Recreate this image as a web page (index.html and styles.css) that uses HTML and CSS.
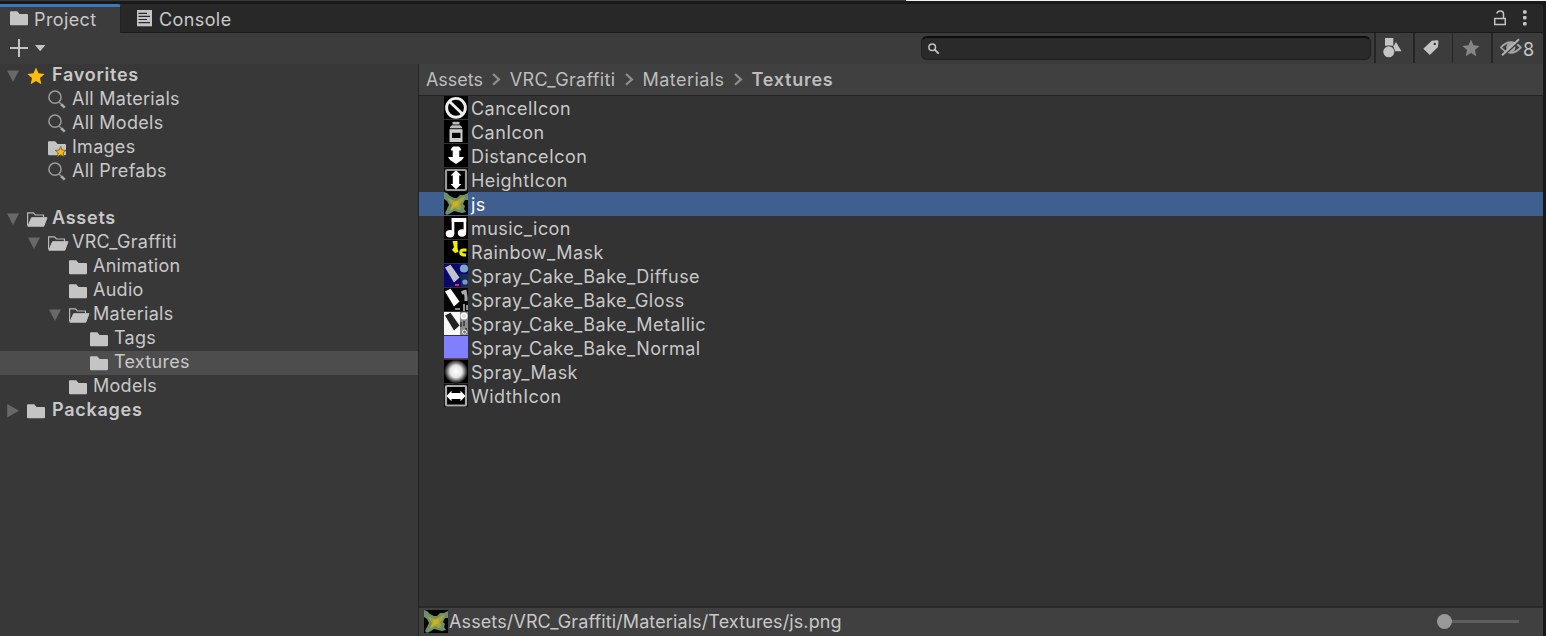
FILE: index.html
```
<!DOCTYPE html>
<html lang="en">
<head>
<meta charset="utf-8">
<title>Project</title>
<link rel="stylesheet" href="styles.css">
</head>
<body>
<svg class="defs" aria-hidden="true">
  <defs>
    <symbol id="folder" viewBox="0 0 18 15"><path d="M0 1.2Q0 .3 .9 .3H7.2L9.6 3H17Q18 3 18 4V13.3Q18 14.3 17 14.3H1Q0 14.3 0 13.3Z" fill="#c4c4c4"/></symbol>
    <symbol id="open" viewBox="0 0 21 15"><path d="M.6 13.5V.9H6.5L8.4 3H16.5V5.5" fill="none" stroke="#b8b8b8" stroke-width="1.2"/><path d="M4.6 5.7H20L16.8 14.2H.9Z" fill="#c4c4c4" stroke="#c4c4c4" stroke-linejoin="round"/></symbol>
    <symbol id="star" viewBox="0 0 18 18"><path d="M9 .5L11.5 6.2L17.6 6.9L13 11L14.3 17.2L9 14L3.7 17.2L5 11L.4 6.9L6.5 6.2Z"/></symbol>
    <symbol id="search" viewBox="0 0 18 19"><circle cx="7" cy="7.2" r="6.1" fill="none" stroke="#9b9b9b" stroke-width="1.5"/><path d="M11.2 12.2L12.7 13.8" stroke="#9b9b9b" stroke-width="1.3"/><path d="M13 14L16.7 17.6" stroke="#a8a8a8" stroke-width="2.6"/></symbol>
    <symbol id="down" viewBox="0 0 12 12"><path d="M0 .5H12L6 12Z" fill="#686868"/></symbol>
    <symbol id="right" viewBox="0 0 12 14"><path d="M.2 0V13.6L12 6.8Z" fill="#686868"/></symbol>
    <symbol id="chevron" viewBox="0 0 9 13"><path d="M1 1L7 6.4L1 11.8" fill="none" stroke="#8f8f8f" stroke-width="2.2"/></symbol>
    <symbol id="js" viewBox="0 0 24 24">
      <rect width="24" height="23" fill="#030503"/>
      <g filter="url(#soft)"><path d="M0 0L3 1L6 4L10 6L13 6L16 3L20 3L24 1V8L21 8L19 12L21 14L20 17L22 20L18 21L14 20L10 19L7 21L3 23L1 21L3 17L5 13L3 9L0 7Z" fill="#6e8d68"/><path d="M3 5L8 8L12 9L17 6L21 4L19 9L16 12L18 17L15 18L11 16L5 20L8 13L5 9Z" fill="#a8a23c"/><path d="M9 10L15 9L14 14L10 15L6 18L9 13Z" fill="#c9b31f"/><path d="M1 3L6 7M18 5L22 3M16 16L20 19M4 21L6 17" stroke="#5d9482" stroke-width="1.3"/></g>
    </symbol>
    <symbol id="spray" viewBox="0 0 24 24"><g filter="url(#soft)"><path d="M1 3.5L6.5 .8L15.5 13.5L10 18.5Z"/></g></symbol>
    <filter id="soft"><feGaussianBlur stdDeviation=".6"/></filter>
    <radialGradient id="glow"><stop offset="0" stop-color="#fff"/><stop offset=".5" stop-color="#e4e4e4"/><stop offset="1" stop-color="#000"/></radialGradient>
  </defs>
</svg>
<div class="window">
  <div class="edge"><div class="edge-light"></div></div>
  <div class="tabs">
    <div class="tab active"><svg class="tab-folder" viewBox="0 0 18 15"><use href="#folder"/></svg><span>Project</span></div>
    <div class="tab console"><svg width="15" height="17" viewBox="0 0 15 17"><rect width="15" height="16.3" fill="#c4c4c4"/><path d="M1.5 3.4H10M1.5 6.4H13M1.5 9.5H10M1.5 12.6H13" stroke="#282828" stroke-width="1.1"/></svg><span>Console</span></div>
    <div class="tab-tools">
      <svg width="12" height="16" viewBox="0 0 12 16"><path d="M.7 8.5H11.3V14.5H.7ZM9.5 8V4Q9.5 1 6.2 1Q3.5 1 2.8 3.5" fill="none" stroke="#c4c4c4" stroke-width="1.5"/></svg>
      <svg width="4" height="16" viewBox="0 0 4 16" fill="#c4c4c4"><rect y=".2" width="3.6" height="3.6" rx="1"/><rect y="6" width="3.6" height="3.6" rx="1"/><rect y="12" width="3.6" height="3.6" rx="1"/></svg>
    </div>
  </div>
  <div class="toolbar">
    <svg class="add" width="36" height="18" viewBox="0 0 36 18"><path d="M0 9H18M9 0V18" stroke="#c4c4c4" stroke-width="2"/><path d="M25 6H35.4L30.2 12.3Z" fill="#c4c4c4"/></svg>
    <div class="field"><svg width="12" height="12" viewBox="0 0 12 12"><circle cx="4.2" cy="4.2" r="3.3" fill="none" stroke="#c4c4c4" stroke-width="1.5"/><path d="M6.7 6.7L10.7 10.7" stroke="#c4c4c4" stroke-width="1.9"/></svg></div>
    <div class="tool t1"><svg width="19" height="20" viewBox="0 0 19 20" fill="#c4c4c4"><path d="M2 0H10.3V7.8H2ZM13 4L18.5 13.2H11.4L10 9Z"/><circle cx="5.8" cy="13.8" r="6.3" fill="#3c3c3c"/><circle cx="5.8" cy="13.8" r="5.5"/></svg></div>
    <div class="tool t2"><svg width="16" height="16" viewBox="0 0 16 16"><path fill-rule="evenodd" d="M8.8 .8L14 .2Q15.4 .2 15.4 1.5L15 7L6.8 15L.3 8.8ZM11.8 2.7A1.2 1.2 0 1 0 11.8 5.1A1.2 1.2 0 1 0 11.8 2.7Z" fill="#c4c4c4"/></svg></div>
    <div class="tool t3"><svg width="18" height="18" fill="#858585"><use href="#star"/></svg></div>
    <div class="tool t4"><svg width="22" height="19" viewBox="0 0 22 19"><path d="M.9 9.5Q10.5-1 20.8 9.5Q10.5 20 .9 9.5Z" fill="none" stroke="#a5a5a5" stroke-width="1.8"/><circle cx="10.8" cy="9.4" r="4.6" fill="#a5a5a5"/><path d="M3.5 17.5L20.5 2" stroke="#3c3c3c" stroke-width="1.8"/><path d="M2 17.2L19 1.3" stroke="#b5b5b5" stroke-width="2"/></svg><span>8</span></div>
  </div>
  <div class="body">
    <div class="tree">
      <div class="node bold"><svg class="arrow"><use href="#down"/></svg><svg class="fav"><use href="#star"/></svg><span>Favorites</span></div>
      <div class="node l1"><i class="arrow"></i><svg class="lens"><use href="#search"/></svg><span>All Materials</span></div>
      <div class="node l1"><i class="arrow"></i><svg class="lens"><use href="#search"/></svg><span>All Models</span></div>
      <div class="node l1"><i class="arrow"></i><svg class="images" viewBox="0 0 19 17"><use href="#folder" width="18" height="15"/><path d="M12.7 5.5L14.2 9L18 9.4L15.2 11.8L16 15.8L12.7 13.8L9.3 15.8L10.2 11.8L7.3 9.4L11.2 9Z" fill="#fbb80d" stroke="#5c4916" stroke-width=".7"/></svg><span>Images</span></div>
      <div class="node l1"><i class="arrow"></i><svg class="lens"><use href="#search"/></svg><span>All Prefabs</span></div>
      <div class="node bold assets"><svg class="arrow"><use href="#down"/></svg><svg class="openf"><use href="#open"/></svg><span>Assets</span></div>
      <div class="node l1"><svg class="arrow"><use href="#down"/></svg><svg class="openf"><use href="#open"/></svg><span>VRC_Graffiti</span></div>
      <div class="node l2"><i class="arrow"></i><svg class="fold"><use href="#folder"/></svg><span>Animation</span></div>
      <div class="node l2"><i class="arrow"></i><svg class="fold"><use href="#folder"/></svg><span>Audio</span></div>
      <div class="node l2"><svg class="arrow"><use href="#down"/></svg><svg class="openf"><use href="#open"/></svg><span>Materials</span></div>
      <div class="node l3"><i class="arrow"></i><svg class="fold"><use href="#folder"/></svg><span>Tags</span></div>
      <div class="node l3 current"><i class="arrow"></i><svg class="fold"><use href="#folder"/></svg><span>Textures</span></div>
      <div class="node l2"><i class="arrow"></i><svg class="fold"><use href="#folder"/></svg><span>Models</span></div>
      <div class="node bold"><svg class="arrow closed"><use href="#right"/></svg><svg class="fold"><use href="#folder"/></svg><span>Packages</span></div>
    </div>
    <div class="main">
      <div class="crumbs"><span class="c1">Assets</span><svg><use href="#chevron"/></svg><span class="c2">VRC_Graffiti</span><svg><use href="#chevron"/></svg><span class="c3">Materials</span><svg><use href="#chevron"/></svg><span class="c4">Textures</span></div>
      <div class="list">
        <div class="file"><svg viewBox="0 0 24 24"><rect width="24" height="23" fill="#000"/><g filter="url(#soft)"><circle cx="12" cy="11.8" r="9.4" fill="none" stroke="#eee" stroke-width="2.9"/><path d="M5.5 5.5L18.5 18" stroke="#eee" stroke-width="2.9"/></g></svg><span>CancelIcon</span></div>
        <div class="file"><svg viewBox="0 0 24 24"><rect width="24" height="23" fill="#000"/><path d="M8.5 1.8H15.5V4.5H8.5Z" fill="#bbb"/><path d="M6 8.2V7L8 5.2H16L18 7V8.2Z" fill="#bbb"/><path d="M5.5 9.2H18.5V22H5.5Z" fill="#ccc"/><path d="M8 12.8H16.5V18H8Z" fill="#050505"/></svg><span>CanIcon</span></div>
        <div class="file"><svg viewBox="0 0 24 24"><rect width="24" height="23" fill="#000"/><g filter="url(#soft)" fill="#fff"><path d="M7 5L9 2.5H15L17 5V6.5H15.3V13H20L18 16L12 20L6 16L4 13H8.7V6.5H7Z"/></g></svg><span>DistanceIcon</span></div>
        <div class="file"><svg viewBox="0 0 24 24"><rect width="24" height="24" fill="#111"/><rect x="2" y="2" width="20" height="20" rx="1" fill="#000" stroke="#999" stroke-width="2.2"/><path filter="url(#soft)" d="M12 2.2L17.5 7.5H15.2V16H17.5L12 21.2L6.5 16H8.8V7.5H6.5Z" fill="#fff"/></svg><span>HeightIcon</span></div>
        <div class="file selected"><svg><use href="#js"/></svg><span>js</span></div>
        <div class="file"><svg viewBox="0 0 24 24"><rect width="24" height="23" fill="#090303"/><path d="M9 18V3.2H20.9V16" fill="none" stroke="#fff" stroke-width="2.6"/><path d="M7.7 4H22.2" stroke="#fff" stroke-width="4"/><ellipse cx="6" cy="17.8" rx="4.3" ry="3.7" fill="#fff"/><ellipse cx="18" cy="17" rx="4.2" ry="3.7" fill="#fff"/></svg><span>music_icon</span></div>
        <div class="file"><svg viewBox="0 0 24 24"><rect width="24" height="23" fill="#000"/><g filter="url(#soft)"><path d="M8.5 1H13.5V8L14.5 12L11 13L8 10L10 7Z" fill="#eeee05"/><path d="M22.5 10H19.5Q16.8 10 16.8 12.7Q16.8 15.2 22 15" stroke="#eeee05" stroke-width="3.2" fill="none"/></g></svg><span>Rainbow_Mask</span></div>
        <div class="file"><svg viewBox="0 0 24 24"><rect width="24" height="23" fill="#08086e"/><use href="#spray" fill="#c2c2cd"/><g filter="url(#soft)"><circle cx="20" cy="4.5" r="4.1" fill="#7ea3d3"/><path d="M15 10H24V23H17V16Z" fill="#172b5b"/><circle cx="21" cy="18" r="2.6" fill="#7999c1"/><path d="M11 21H15" stroke="#d02c81" stroke-width="2"/></g></svg><span>Spray_Cake_Bake_Diffuse</span></div>
        <div class="file"><svg viewBox="0 0 24 24"><rect width="24" height="23" fill="#050505"/><use href="#spray" fill="#fff"/><g filter="url(#soft)"><path d="M18 3L20 6M21 2L22 9V13" stroke="#aaa" stroke-width="3" fill="none"/><path d="M11 21H16M20 16V23M23 17V22" stroke="#aaa" stroke-width="1.7" fill="none"/></g></svg><span>Spray_Cake_Bake_Gloss</span></div>
        <div class="file"><svg viewBox="0 0 24 24"><rect width="24" height="23" fill="#f8f8f8"/><use href="#spray" fill="#222"/><g filter="url(#soft)"><path d="M16 0H24V23H16Z" fill="#8b8b8b"/><circle cx="20" cy="4" r="2.8" fill="#ddd" stroke="#fff" stroke-width="1.5"/><path d="M17 10V15M20 9V14M22 16V22" stroke="#333" stroke-width="1.5"/><circle cx="20.5" cy="20" r="2" stroke="#eee" fill="#777"/></g></svg><span>Spray_Cake_Bake_Metallic</span></div>
        <div class="file"><svg viewBox="0 0 24 24"><rect width="24" height="22.3" fill="#8080ff"/><path d="M0 22.6H24" stroke="#7e355a" stroke-width=".8"/></svg><span>Spray_Cake_Bake_Normal</span></div>
        <div class="file"><svg viewBox="0 0 24 24"><rect width="24" height="23" fill="#000"/><circle cx="12" cy="11.5" r="12" fill="url(#glow)"/></svg><span>Spray_Mask</span></div>
        <div class="file"><svg viewBox="0 0 24 24"><rect width="24" height="23" fill="#111"/><rect x="2" y="2" width="20" height="19.5" rx="1" fill="#000" stroke="#aaa" stroke-width="2.2"/><path filter="url(#soft)" d="M2.5 12L7.5 6.8V9H16.5V6.8L21.5 12L16.5 17.2V15H7.5V17.2Z" fill="#fff"/></svg><span>WidthIcon</span></div>
      </div>
      <div class="footer"><svg class="thumb"><use href="#js"/></svg><span>Assets/VRC_Graffiti/Materials/Textures/js.png</span><div class="slider"><div class="knob"></div><div class="track"></div></div></div>
    </div>
  </div>
</div>
</body>
</html>
```
FILE: styles.css
```
* { box-sizing: border-box; }
body { margin: 0; background: #191919; color: #c8c8c8; font: 18px/24px Inter, sans-serif; letter-spacing: .45px; overflow: hidden; }
svg { display: block; flex: none; }
span { white-space: nowrap; }
.defs { position: absolute; width: 0; height: 0; }
.window { width: 1546px; height: 636px; padding-right: 3px; display: flex; flex-direction: column; }
.edge { height: 4px; margin-right: -3px; background: linear-gradient(#383838 1px, #191919 1px); flex: none; }
.edge-light { height: 1px; margin-left: 906px; background: #f0f0f0; }
.tabs { height: 29px; flex: none; display: flex; background: #282828; border-bottom: 1px solid #1b1b1b; border-top-right-radius: 4px; }
.tab { display: flex; align-items: flex-start; }
.tab span { line-height: 24px; margin-top: 4px; letter-spacing: .4px; }
.active { width: 121px; height: 29px; background: #3c3c3c; border-top: 3px solid #3a79bb; border-radius: 0 3px 0 0; padding-left: 10px; gap: 6px; border-right: 1px solid #222; }
.active span { margin-top: 1px; }
.tab-folder { width: 18px; height: 15px; margin-top: 4px; }
.console { padding-left: 16px; gap: 7px; }
.console svg { margin-top: 6px; }
.tab-tools { margin-left: auto; display: flex; gap: 17px; padding: 6px 16px 0 0; }
.toolbar { height: 31px; flex: none; display: flex; background: #3c3c3c; }
.add { margin: 6px 0 0 10px; }
.field { width: 450px; height: 24px; margin: 3px 3px 0 auto; background: #2a2a2a; border: 1px solid #202020; border-top: 2px solid #0d0d0d; border-radius: 6px; padding: 5px 0 0 6px; }
.tool { height: 30px; border-left: 2px solid #252525; display: flex; }
.t1 { width: 39px; padding: 5px 0 0 7px; }
.t2 { width: 39px; padding: 7px 0 0 8px; }
.t3 { width: 39px; padding: 6px 0 0 9px; border-left-width: 1px; }
.t4 { width: 52px; padding: 5px 0 0 7px; gap: 1px; }
.t4 span { line-height: 23px; }
.body { flex: 1; display: flex; min-height: 0; }
.tree { width: 418px; flex: none; background: #383838; letter-spacing: .28px; }
.node { height: 24px; display: flex; padding-left: 7px; align-items: flex-start; }
.node span { line-height: 22px; }
.l1 { padding-left: 28px; }
.l2 { padding-left: 49px; }
.l3 { padding-left: 70px; }
.assets { margin-top: 23px; }
.current { background: #4d4d4d; }
.arrow { width: 12px; height: 12px; margin: 6px 8px 0 0; flex: none; }
.closed { height: 14px; margin-top: 5px; }
.fav { width: 18px; height: 18px; fill: #fdbe0b; margin: 3px 7px 0 0; }
.lens { width: 18px; height: 19px; margin: 2px 6px 0 0; }
.fold { width: 18px; height: 15px; margin: 5px 7px 0 0; }
.l2 .fold, .l3 .fold { margin-right: 6px; }
.l2 .fold, .l3 .fold, .l2 .openf { margin-top: 4.6px; }
.openf { width: 21px; height: 15px; margin: 5px 4px 0 0; }
.l1 .openf, .l2 .openf { margin-right: 3px; }
.images { width: 19px; height: 17px; margin: 5px 5px 0 0; }
.bold, .c4 { font-weight: 600; letter-spacing: .75px; }
.main { flex: 1; border-left: 1px solid #232323; background: #333; display: flex; flex-direction: column; }
.crumbs { height: 32px; background: #404040; border-bottom: 1px solid #242424; display: flex; padding-left: 7px; color: #bdbdbd; }
.crumbs span { line-height: 32px; }
.crumbs .c1 { letter-spacing: -.05px; }
.crumbs .c2 { letter-spacing: .35px; }
.crumbs svg { width: 9px; height: 13px; margin: 9px 9px 0; }
.list { flex: 1; }
.file { height: 24px; display: flex; gap: 3px; padding-left: 25px; }
.file svg { width: 24px; height: 24px; }
.file span { line-height: 25px; }
.selected { background: #3e5f90; color: #fff; }
.footer { height: 30px; background: #404040; border-top: 2px solid #292929; display: flex; padding-left: 5px; }
.thumb { width: 24px; height: 24px; margin: 2px 1px 0 0; }
.footer span { line-height: 28px; letter-spacing: .11px; }
.slider { margin: 6px 24px 0 auto; display: flex; align-items: center; height: 15px; }
.knob { width: 15px; height: 15px; border-radius: 50%; background: #999; }
.track { width: 67px; height: 3px; background: #5e5e5e; }
```
